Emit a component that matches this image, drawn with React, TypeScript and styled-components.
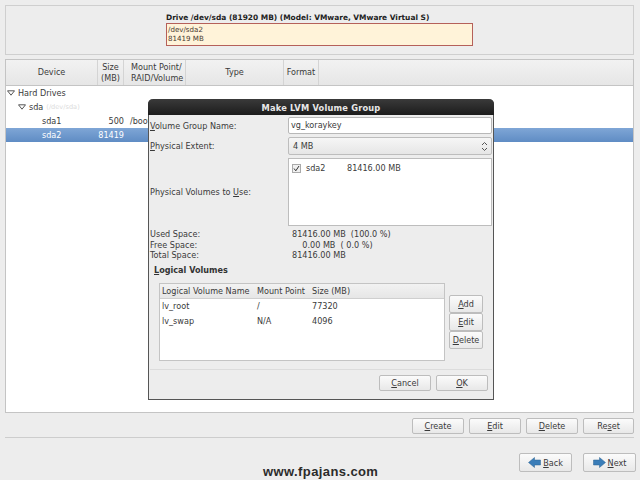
import React from "react";
import styled, { createGlobalStyle } from "styled-components";

const Global = createGlobalStyle`
  html, body { margin: 0; padding: 0; background: #ededed; }
  body { font-family: "DejaVu Sans", Verdana, sans-serif; font-size: 8.1px; color: #3a3a3a; }
  u { text-decoration-thickness: 1px; text-underline-offset: 1px; }
`;

const Screen = styled.div`
  position: relative;
  width: 640px;
  height: 480px;
  overflow: hidden;
  background: #ededed;
  display: flex;
  flex-direction: column;
  padding: 5px 6px 0 5px;
  box-sizing: border-box;
`;

const DriveFrame = styled.section`
  height: 50px;
  box-sizing: border-box;
  border: 1px solid #cfcfcf;
  padding: 6px 0 0 160px;
  display: flex;
  flex-direction: column;
`;
const DriveTitle = styled.div`
  font-weight: bold;
  font-size: 7.45px;
  line-height: 11px;
  color: #222;
  white-space: nowrap;
`;
const DriveBar = styled.div`
  width: 307px;
  height: 23px;
  box-sizing: border-box;
  border: 1px solid #b5605a;
  background: #fff3d9;
  font-size: 7.1px;
  line-height: 8.5px;
  padding: 2px 0 0 1px;
  color: #4a3a30;
`;

const TableFrame = styled.section`
  margin-top: 4px;
  height: 354px;
  box-sizing: border-box;
  border: 1px solid #c4c4c4;
  background: #fff;
  display: flex;
  flex-direction: column;
`;
const columns = "92px 26px 62px 98px 35px 1fr";
const HeaderRow = styled.div`
  display: grid;
  grid-template-columns: ${columns};
  height: 25px;
  flex: none;
  background: linear-gradient(#f2f2f2, #e6e6e6);
  border-bottom: 1px solid #c4c4c4;
`;
const HeaderCell = styled.div<{ $left?: boolean }>`
  display: flex;
  align-items: center;
  justify-content: ${(p) => (p.$left ? "flex-start" : "center")};
  padding-left: ${(p) => (p.$left ? 7 : 0)}px;
  border-right: 1px solid #d4d4d4;
  font-size: 8.1px;
  line-height: 10.5px;
  text-align: ${(p) => (p.$left ? "left" : "center")};
  white-space: nowrap;
  &:last-child { border-right: none; }
`;
const TreeBody = styled.div`
  display: flex;
  flex-direction: column;
`;
const TreeRow = styled.div<{ $selected?: boolean }>`
  display: grid;
  grid-template-columns: ${columns};
  height: 14px;
  align-items: center;
  line-height: 14px;
  white-space: nowrap;
  background: ${(p) => (p.$selected ? "linear-gradient(#7fa6d6, #5f8cc4)" : "transparent")};
  color: ${(p) => (p.$selected ? "#fff" : "#3a3a3a")};
`;
const DeviceCell = styled.div<{ $indent: number }>`
  padding-left: ${(p) => p.$indent}px;
  display: flex;
  align-items: center;
  gap: 3px;
`;
const SizeCell = styled.div`
  text-align: right;
`;
const MountCell = styled.div`
  padding-left: 6px;
`;
const Faint = styled.span`
  color: #dcdcdc;
  font-size: 6.6px;
`;
const Expander = styled.svg`
  width: 8px;
  height: 6px;
  flex: none;
`;

const ActionRow = styled.div`
  display: flex;
  justify-content: flex-end;
  gap: 5px;
  margin-top: 5px;
  padding-bottom: 3px;
  border-bottom: 1px solid #cdcdcd;
`;
const Btn = styled.button<{ $w: number; $h?: number }>`
  width: ${(p) => p.$w}px;
  height: ${(p) => p.$h ?? 16}px;
  box-sizing: border-box;
  padding: 0;
  border: 1px solid #bdbdbd;
  border-radius: 2px;
  background: linear-gradient(#fbfbfb, #e8e8e8);
  font-family: "DejaVu Sans", Verdana, sans-serif;
  font-size: 8.1px;
  color: #3a3a3a;
  display: flex;
  align-items: center;
  justify-content: center;
  gap: 2px;
`;
const NavRow = styled.div`
  display: flex;
  justify-content: flex-end;
  gap: 11px;
  margin-top: 15px;
  margin-right: -2px;
`;
const Watermark = styled.div`
  position: absolute;
  left: 263px;
  top: 464px;
  font-family: "Liberation Sans", Arial, sans-serif;
  font-weight: bold;
  font-size: 13px;
  letter-spacing: 0.4px;
  line-height: 16px;
  color: #2b2b2b;
`;

const Dialog = styled.div`
  position: absolute;
  left: 148px;
  top: 99px;
  width: 346px;
  height: 301px;
  box-sizing: border-box;
  background: #ededed;
  border: 1px solid #555;
  border-top: none;
  border-radius: 5px 5px 0 0;
  display: flex;
  flex-direction: column;
`;
const DialogTitle = styled.div`
  height: 16px;
  flex: none;
  margin: 0 -1px;
  border-radius: 5px 5px 0 0;
  background: linear-gradient(#3a3a3a, #1c1c1c);
  color: #e8e8e8;
  font-weight: bold;
  font-size: 8.25px;
  letter-spacing: 0.2px;
  line-height: 18px;
  text-align: center;
`;
const DialogBody = styled.div`
  flex: 1;
  padding: 2px 1px 0 1px;
  display: flex;
  flex-direction: column;
`;
const FormGrid = styled.div`
  display: grid;
  grid-template-columns: 138px 204px;
  grid-template-rows: 17px 18px 68px;
  row-gap: 3px;
  align-items: center;
  white-space: nowrap;
`;
const Entry = styled.div`
  height: 17px;
  box-sizing: border-box;
  border: 1px solid #b8b8b8;
  background: #fff;
  padding-left: 2px;
  line-height: 15px;
  border-radius: 2px;
`;
const Combo = styled.div`
  height: 18px;
  box-sizing: border-box;
  border: 1px solid #bdbdbd;
  border-radius: 2px;
  background: linear-gradient(#f6f6f6, #e6e6e6);
  padding: 0 3px 0 4px;
  display: flex;
  align-items: center;
  justify-content: space-between;
`;
const ListBox = styled.div`
  height: 68px;
  box-sizing: border-box;
  border: 1px solid #bdbdbd;
  background: #fff;
  padding: 2px 3px;
  display: flex;
  align-self: start;
`;
const ListRow = styled.div`
  display: flex;
  align-items: center;
  height: 12px;
  margin-top: 1px;
`;
const Check = styled.svg`
  width: 9px;
  height: 9px;
  margin-right: 5px;
  flex: none;
`;
const VolumeName = styled.span`
  width: 41px;
`;
const SpaceGrid = styled.div`
  display: grid;
  grid-template-columns: 142px 1fr;
  grid-auto-rows: 10.5px;
  line-height: 10.5px;
  margin-top: 3px;
`;
const Amount = styled.span`
  white-space: pre;
`;
const SectionTitle = styled.div`
  font-weight: bold;
  font-size: 8.1px;
  padding-left: 4px;
  margin-top: 3px;
  line-height: 12px;
  color: #333;
`;
const LvArea = styled.div`
  display: flex;
  margin: 7px 0 0 9px;
  gap: 4px;
`;
const LvTable = styled.div`
  width: 286px;
  height: 78px;
  box-sizing: border-box;
  border: 1px solid #c4c4c4;
  background: #fff;
  display: flex;
  flex-direction: column;
`;
const lvCols = "95px 55px 1fr";
const LvHeader = styled.div`
  display: grid;
  grid-template-columns: ${lvCols};
  height: 14px;
  flex: none;
  align-items: center;
  background: linear-gradient(#f2f2f2, #e6e6e6);
  border-bottom: 1px solid #cfcfcf;
  padding-left: 2px;
  white-space: nowrap;
`;
const LvRow = styled.div`
  display: grid;
  grid-template-columns: ${lvCols};
  height: 15px;
  line-height: 15px;
  padding-left: 2px;
`;
const SideButtons = styled.div`
  display: flex;
  flex-direction: column;
  margin-top: 12px;
`;
const DialogSeparator = styled.div`
  margin: 8px 0 0;
  border-top: 1px solid #dcdcdc;
`;
const DialogActions = styled.div`
  display: flex;
  justify-content: flex-end;
  gap: 5px;
  padding: 5px 4px 0 0;
`;
const ChoiceArrows = styled.svg`
  width: 7px;
  height: 11px;
`;
const NavArrow = styled.svg<{ $flip?: boolean }>`
  width: 13px;
  height: 11px;
  transform: ${(p) => (p.$flip ? "scaleX(-1)" : "none")};
`;

const Down = () => (
  <Expander viewBox="0 0 8 6">
    <path d="M0.5 0.8 H7.5 L4 5.2 Z" fill="#fff" stroke="#444" strokeWidth="0.9" />
  </Expander>
);

const Arrow = ({ flip }: { flip?: boolean }) => (
  <NavArrow viewBox="0 0 13 11" $flip={flip}>
    <path d="M0.5 3 H6.5 V0.5 L12.5 5.5 L6.5 10.5 V8 H0.5 Z" fill="#3a7db8" stroke="#2a6291" strokeWidth="0.5" />
  </NavArrow>
);

export default function App() {
  return (
    <Screen>
      <Global />
      <DriveFrame>
        <DriveTitle>Drive /dev/sda (81920 MB) (Model: VMware, VMware Virtual S)</DriveTitle>
        <DriveBar>
          /dev/sda2
          <br />
          81419 MB
        </DriveBar>
      </DriveFrame>

      <TableFrame>
        <HeaderRow>
          <HeaderCell>Device</HeaderCell>
          <HeaderCell>
            Size
            <br />
            (MB)
          </HeaderCell>
          <HeaderCell $left>
            Mount Point/
            <br />
            RAID/Volume
          </HeaderCell>
          <HeaderCell>Type</HeaderCell>
          <HeaderCell>Format</HeaderCell>
          <HeaderCell />
        </HeaderRow>
        <TreeBody>
          <TreeRow>
            <DeviceCell $indent={1}>
              <Down /> Hard Drives
            </DeviceCell>
          </TreeRow>
          <TreeRow>
            <DeviceCell $indent={12}>
              <Down /> sda <Faint>(/dev/sda)</Faint>
            </DeviceCell>
          </TreeRow>
          <TreeRow>
            <DeviceCell $indent={36}>sda1</DeviceCell>
            <SizeCell>500</SizeCell>
            <MountCell>/boot</MountCell>
          </TreeRow>
          <TreeRow $selected>
            <DeviceCell $indent={36}>sda2</DeviceCell>
            <SizeCell>81419</SizeCell>
          </TreeRow>
        </TreeBody>
      </TableFrame>

      <ActionRow>
        <Btn $w={52}><span><u>C</u>reate</span></Btn>
        <Btn $w={52}><span><u>E</u>dit</span></Btn>
        <Btn $w={52}><span><u>D</u>elete</span></Btn>
        <Btn $w={51}><span>Re<u>s</u>et</span></Btn>
      </ActionRow>
      <NavRow>
        <Btn $w={53} $h={19}><Arrow flip /><span><u>B</u>ack</span></Btn>
        <Btn $w={53} $h={19}><Arrow /><span><u>N</u>ext</span></Btn>
      </NavRow>
      <Watermark>www.fpajans.com</Watermark>

      <Dialog>
        <DialogTitle>Make LVM Volume Group</DialogTitle>
        <DialogBody>
          <FormGrid>
            <span><u>V</u>olume Group Name:</span>
            <Entry>vg_koraykey</Entry>
            <span><u>P</u>hysical Extent:</span>
            <Combo>
              4 MB
              <ChoiceArrows viewBox="0 0 7 11">
                <path d="M1 4 L3.5 1.5 L6 4 M1 7 L3.5 9.5 L6 7" fill="none" stroke="#555" strokeWidth="1" />
              </ChoiceArrows>
            </Combo>
            <span>Physical Volumes to <u>U</u>se:</span>
            <ListBox>
              <ListRow>
                <Check viewBox="0 0 9 9">
                  <rect x="0.5" y="0.5" width="8" height="8" fill="#f0f0f0" stroke="#aaa" />
                  <path d="M2 4.5 L3.8 6.8 L7 2" fill="none" stroke="#333" strokeWidth="1" />
                </Check>
                <VolumeName>sda2</VolumeName>
                <span>81416.00 MB</span>
              </ListRow>
            </ListBox>
          </FormGrid>
          <SpaceGrid>
            <span>Used Space:</span>
            <Amount>81416.00 MB  (100.0 %)</Amount>
            <span>Free Space:</span>
            <Amount>{"    0.00 MB  ( 0.0 %)"}</Amount>
            <span>Total Space:</span>
            <Amount>81416.00 MB</Amount>
          </SpaceGrid>
          <SectionTitle><u>L</u>ogical Volumes</SectionTitle>
          <LvArea>
            <LvTable>
              <LvHeader>
                <span>Logical Volume Name</span>
                <span>Mount Point</span>
                <span>Size (MB)</span>
              </LvHeader>
              <div>
                <LvRow>
                  <span>lv_root</span>
                  <span>/</span>
                  <span>77320</span>
                </LvRow>
                <LvRow>
                  <span>lv_swap</span>
                  <span>N/A</span>
                  <span>4096</span>
                </LvRow>
              </div>
            </LvTable>
            <SideButtons>
              <Btn $w={34} $h={18}><span><u>A</u>dd</span></Btn>
              <Btn $w={34} $h={18}><span><u>E</u>dit</span></Btn>
              <Btn $w={34} $h={18}><span><u>D</u>elete</span></Btn>
            </SideButtons>
          </LvArea>
          <DialogSeparator />
          <DialogActions>
            <Btn $w={52}><span><u>C</u>ancel</span></Btn>
            <Btn $w={52}><span><u>O</u>K</span></Btn>
          </DialogActions>
        </DialogBody>
      </Dialog>
    </Screen>
  );
}
